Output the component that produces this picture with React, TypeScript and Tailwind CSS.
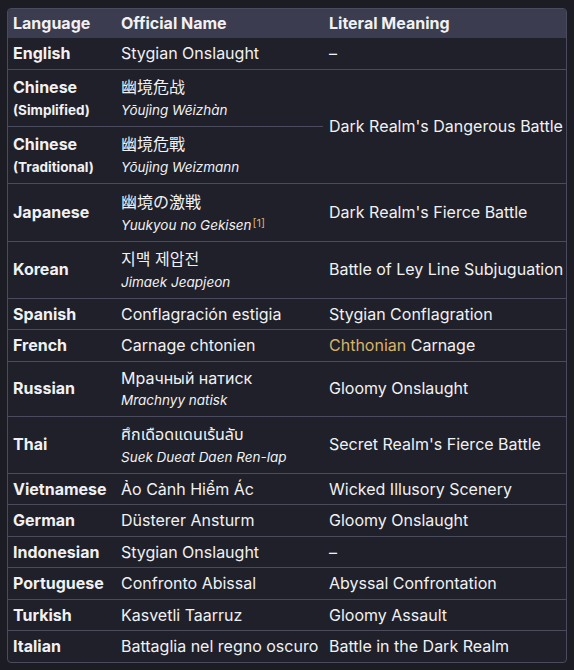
import React from 'react'

type Row = {
  lang: string
  sub?: string
  name: string
  roman?: string
  cite?: boolean
  meaning?: React.ReactNode
  span?: number
  skip?: boolean
  cjk?: string
  top?: string
}

const rows: Row[] = [
  { lang: 'English', name: 'Stygian Onslaught', meaning: '–' },
  { lang: 'Chinese', sub: '(Simplified)', name: '幽境危战', roman: 'Yōujìng Wēizhàn', meaning: "Dark Realm's Dangerous Battle", span: 2, cjk: 'SC' },
  { lang: 'Chinese', sub: '(Traditional)', name: '幽境危戰', roman: 'Yōujìng Weizmann', skip: true, cjk: 'TC' },
  { lang: 'Japanese', name: '幽境の激戦', roman: 'Yuukyou no Gekisen', cite: true, meaning: "Dark Realm's Fierce Battle", cjk: 'JP', top: 'h-[27px]' },
  { lang: 'Korean', name: '지맥 제압전', roman: 'Jimaek Jeapjeon', meaning: 'Battle of Ley Line Subjuguation', cjk: 'KR' },
  { lang: 'Spanish', name: 'Conflagración estigia', meaning: 'Stygian Conflagration' },
  {
    lang: 'French',
    name: 'Carnage chtonien',
    meaning: (
      <>
        <span className="text-[#d9b26a]">Chthonian</span> Carnage
      </>
    ),
  },
  { lang: 'Russian', name: 'Мрачный натиск', roman: 'Mrachnyy natisk', meaning: 'Gloomy Onslaught', top: 'h-[24px]' },
  { lang: 'Thai', name: 'ศึกเดือดแดนเร้นลับ', roman: 'Suek Dueat Daen Ren-lap', meaning: "Secret Realm's Fierce Battle" },
  { lang: 'Vietnamese', name: 'Ảo Cảnh Hiểm Ác', meaning: 'Wicked Illusory Scenery' },
  { lang: 'German', name: 'Düsterer Ansturm', meaning: 'Gloomy Onslaught' },
  { lang: 'Indonesian', name: 'Stygian Onslaught', meaning: '–' },
  { lang: 'Portuguese', name: 'Confronto Abissal', meaning: 'Abyssal Confrontation' },
  { lang: 'Turkish', name: 'Kasvetli Taarruz', meaning: 'Gloomy Assault' },
  { lang: 'Italian', name: 'Battaglia nel regno oscuro', meaning: 'Battle in the Dark Realm' },
]

const cjkFont: Record<string, string> = {
  SC: "font-['Inter','Noto_Sans_CJK_SC',sans-serif]",
  TC: "font-['Inter','Noto_Sans_CJK_TC',sans-serif]",
  JP: "font-['Inter','Noto_Sans_CJK_JP',sans-serif]",
  KR: "font-['Inter','Noto_Sans_CJK_KR',sans-serif]",
}

export default function App() {
  return (
    <div className="min-h-[670px] bg-[#1b1c24] pl-[7px] pr-[7px] pt-[8px] font-['Inter','Noto_Sans','Noto_Sans_Thai','Noto_Sans_CJK_SC',sans-serif] text-[#f1f1f3]">
      <div className="w-[560px] overflow-hidden rounded-[4px] border border-[#4a4c5e] bg-[#1f2029]">
        <table className="w-full table-fixed border-collapse text-[16px]">
          <colgroup>
            <col className="w-[107px]" />
            <col className="w-[208px]" />
            <col />
          </colgroup>
          <thead>
            <tr className="bg-[#3b3c4f] text-left font-bold">
              <th className="px-[5px] py-[4px] leading-[21px]">Language</th>
              <th className="px-[6px] py-[4px] leading-[21px]">Official Name</th>
              <th className="px-[6px] py-[4px] leading-[21px]">Literal Meaning</th>
            </tr>
          </thead>
          <tbody>
            {rows.map((r, i) => {
              const last = i === rows.length - 1
              const rowBorder = last ? '' : 'border-b border-[#4a4c5e]'
              return (
                <tr key={i} className={rowBorder}>
                  <td className="whitespace-nowrap px-[5px] py-[5px] align-middle font-bold leading-[20.5px]">
                    {r.sub ? (
                      <>
                        <div className="flex h-[26px] items-center">{r.lang}</div>
                        <div className="flex h-[20px] items-center text-[13.5px]">{r.sub}</div>
                      </>
                    ) : (
                      r.lang
                    )}
                  </td>
                  <td className="whitespace-nowrap px-[6px] py-[5px] align-middle leading-[20.5px]">
                    {r.roman ? (
                      <>
                        <div className={`flex items-center overflow-hidden ${r.top ?? 'h-[26px]'} ${r.cjk ? cjkFont[r.cjk] : ''}`}>
                          {r.name}
                        </div>
                        <div className="flex h-[20px] items-center text-[13.5px] italic">
                          {r.roman}
                          {r.cite && (
                            <span className="-mt-[5px] ml-[1px] text-[11px] not-italic leading-none text-[#d9b26a]">[1]</span>
                          )}
                        </div>
                      </>
                    ) : (
                      r.name
                    )}
                  </td>
                  {!r.skip && (
                    <td
                      rowSpan={r.span}
                      className={`whitespace-nowrap py-[5px] pl-[6px] pr-[2px] align-middle leading-[20.5px] ${r.span ? 'border-b border-[#4a4c5e]' : ''}`}
                    >
                      {r.meaning}
                    </td>
                  )}
                </tr>
              )
            })}
          </tbody>
        </table>
      </div>
    </div>
  )
}
